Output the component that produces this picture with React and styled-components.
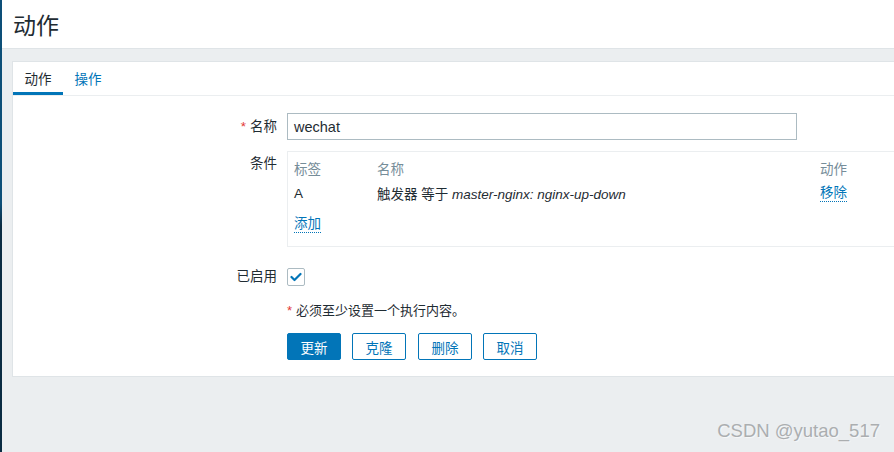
import React from 'react';
import styled, { createGlobalStyle } from 'styled-components';

const GlobalStyle = createGlobalStyle`
    html, body {
        margin: 0;
        padding: 0;
        background: #ebeef0;
        overflow: hidden;
    }
    body {
        font-family: "Liberation Sans", Arial, "Noto Sans CJK SC", sans-serif;
        font-size: 13.5px;
        color: #1f2c33;
    }
`;

const Page = styled.div`
    display: flex;
    width: 894px;
    height: 452px;
    position: relative;
    overflow: hidden;
`;

const SideEdge = styled.div`
    width: 2px;
    flex: none;
    background: linear-gradient(#0d4f78 0%, #0d4f78 45%, #0a2b42 50%, #0a2b42 100%);
`;

const Main = styled.div`
    flex: 1;
    display: flex;
    flex-direction: column;
    min-width: 0;
`;

const Header = styled.div`
    height: 48px;
    background: white;
    border-bottom: 1px solid #dfe4e7;
    display: flex;
    align-items: center;
    padding-left: 11px;
`;

const Title = styled.h1`
    margin: 0;
    font-size: 23px;
    font-weight: 400;
    color: #1f2c33;
`;

const Content = styled.div`
    padding: 12px 0 0 10px;
`;

const Card = styled.div`
    width: 960px;
    background: white;
    border: 1px solid #dfe4e7;
    padding-bottom: 16px;
`;

const TabBar = styled.div`
    display: flex;
    height: 33px;
    border-bottom: 1px solid #ebeef0;
`;

const Tab = styled.div`
    padding: 0 11px;
    display: flex;
    align-items: center;
    color: ${p => (p.$active ? '#1f2c33' : '#0275b8')};
    border-bottom: 3px solid ${p => (p.$active ? '#0275b8' : 'transparent')};
    padding-top: 1px;
    min-width: 28px;
    justify-content: center;
    &:first-child {
        width: 28px;
    }
`;

const Form = styled.div`
    display: grid;
    grid-template-columns: 264px 1fr;
    column-gap: 10px;
    padding-top: 17px;
`;

const Label = styled.div`
    text-align: right;
    line-height: ${p => p.$lh || '27px'};
    padding-top: ${p => p.$pt || '0px'};
`;

const Star = styled.span`
    color: #e33734;
    margin-right: 4px;
`;

const Field = styled.div`
    margin-bottom: ${p => p.$mb || '11px'};
`;

const TextInput = styled.div`
    width: 510px;
    height: 27px;
    box-sizing: border-box;
    border: 1px solid #acbbc2;
    padding: 0 6px;
    display: flex;
    align-items: center;
    font-size: 14.5px;
`;

const CondBox = styled.div`
    width: 640px;
    border: 1px solid #ebeef0;
    padding: 3px 6px 10px;
`;

const CondRow = styled.div`
    display: grid;
    grid-template-columns: 83px 443px 1fr;
    height: ${p => p.$h || '24px'};
    align-items: center;
    color: ${p => (p.$head ? '#768d99' : '#1f2c33')};
`;

const Italic = styled.i`
    font-style: italic;
`;

const LinkText = styled.span`
    color: #0275b8;
    border-bottom: 1px dotted #0275b8;
    line-height: 16px;
    justify-self: start;
`;

const AddRow = styled.div`
    margin-top: 7px;
    height: 24px;
    display: flex;
    align-items: center;
`;

const CheckRow = styled.div`
    height: 27px;
    display: flex;
    align-items: center;
`;

const CheckBox = styled.div`
    width: 18px;
    height: 18px;
    box-sizing: border-box;
    border: 1px solid #acbbc2;
    border-radius: 2px;
    display: flex;
    align-items: center;
    justify-content: center;
`;

const Note = styled.div`
    margin-top: 13px;
    line-height: 16px;
    font-size: 13px;
`;

const Buttons = styled.div`
    display: flex;
    gap: 11px;
    margin-top: 14px;
`;

const Button = styled.button`
    width: 54px;
    height: 27px;
    box-sizing: border-box;
    border-radius: 2px;
    border: 1px solid #0275b8;
    background: ${p => (p.$primary ? '#0275b8' : 'white')};
    color: ${p => (p.$primary ? 'white' : '#0275b8')};
    font-family: inherit;
    font-size: 13.5px;
    padding: 0;
    &:nth-child(3) {
        margin-left: 1px;
    }
`;

const Watermark = styled.div`
    position: absolute;
    right: 14px;
    bottom: 10px;
    font-size: 18.5px;
    color: #abaeb0;
    text-shadow: 1px 1px 1px rgba(255, 255, 255, 0.6);
    font-family: "Liberation Sans", Arial, sans-serif;
`;

function App() {
    return (
        <>
            <GlobalStyle />
            <Page>
                <SideEdge />
                <Main>
                    <Header>
                        <Title>动作</Title>
                    </Header>
                    <Content>
                        <Card>
                            <TabBar>
                                <Tab $active>动作</Tab>
                                <Tab>操作</Tab>
                            </TabBar>
                            <Form>
                                <Label><Star>*</Star>名称</Label>
                                <Field>
                                    <TextInput>wechat</TextInput>
                                </Field>

                                <Label $lh="16px" $pt="5px">条件</Label>
                                <Field $mb="16px">
                                    <CondBox>
                                        <CondRow $head $h="26px">
                                            <span>标签</span>
                                            <span>名称</span>
                                            <span>动作</span>
                                        </CondRow>
                                        <CondRow>
                                            <span>A</span>
                                            <span>触发器 等于 <Italic>master-nginx: nginx-up-down</Italic></span>
                                            <LinkText>移除</LinkText>
                                        </CondRow>
                                        <AddRow>
                                            <LinkText>添加</LinkText>
                                        </AddRow>
                                    </CondBox>
                                </Field>

                                <Label>已启用</Label>
                                <Field $mb="0px">
                                    <CheckRow>
                                        <CheckBox>
                                            <svg width="12" height="10" viewBox="0 0 12 10">
                                                <path d="M1.5 5 L4.5 8 L10.5 2" fill="none" stroke="#0275b8" strokeWidth="2.2" strokeLinecap="round" strokeLinejoin="round" />
                                            </svg>
                                        </CheckBox>
                                    </CheckRow>
                                </Field>

                                <div />
                                <Field $mb="0px">
                                    <Note><Star>*</Star>必须至少设置一个执行内容。</Note>
                                    <Buttons>
                                        <Button $primary>更新</Button>
                                        <Button>克隆</Button>
                                        <Button>删除</Button>
                                        <Button>取消</Button>
                                    </Buttons>
                                </Field>
                            </Form>
                        </Card>
                    </Content>
                </Main>
                <Watermark>CSDN @yutao_517</Watermark>
            </Page>
        </>
    );
}

export default App;
